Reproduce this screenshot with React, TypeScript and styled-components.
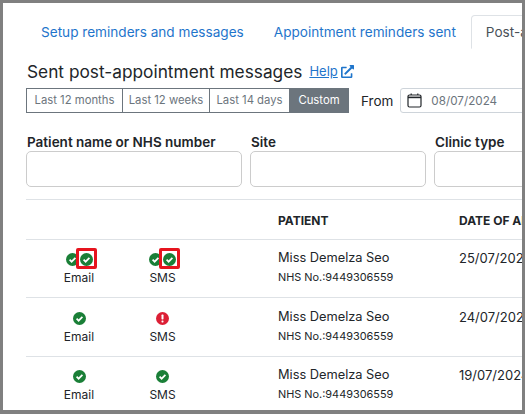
import styled, { createGlobalStyle } from 'styled-components';
import { FaExternalLinkAlt } from 'react-icons/fa';

const GlobalStyle = createGlobalStyle`
  html, body {
    margin: 0;
    padding: 0;
    background: #fff;
  }
  body {
    font-family: 'Inter', 'Open Sans', sans-serif;
    color: #212529;
  }
`;

const rows = [
  { name: 'Miss Demelza Seo', nhs: '9449306559', date: '25/07/2024', email: 'double', sms: 'double', tall: false },
  { name: 'Miss Demelza Seo', nhs: '9449306559', date: '24/07/2024', email: 'ok', sms: 'failed', tall: true },
  { name: 'Miss Demelza Seo', nhs: '9449306559', date: '19/07/2024', email: 'ok', sms: 'ok', tall: false },
];

function CheckIcon() {
  return (
    <StatusSvg viewBox="0 0 13 13">
      <circle cx="6.5" cy="6.5" r="6.5" fill="#1a7f37" />
      <path d="M3.6 6.7l2 2 3.8-3.9" fill="none" stroke="#fff" strokeWidth="1.7" />
    </StatusSvg>
  );
}

function AlertIcon() {
  return (
    <StatusSvg viewBox="0 0 13 13">
      <circle cx="6.5" cy="6.5" r="6.5" fill="#dc1f35" />
      <rect x="5.5" y="2.6" width="2" height="4.8" rx="0.6" fill="#fff" />
      <rect x="5.5" y="8.4" width="2" height="2" rx="0.6" fill="#fff" />
    </StatusSvg>
  );
}

function Status({ label, state }: { label: string; state: string }) {
  return (
    <StatusBlock>
      <IconRow>
        {state === 'failed' ? <AlertIcon /> : <CheckIcon />}
        {state === 'double' && (
          <Highlighted>
            <CheckIcon />
          </Highlighted>
        )}
      </IconRow>
      <StatusLabel>{label}</StatusLabel>
    </StatusBlock>
  );
}

export default function App() {
  return (
    <>
      <GlobalStyle />
      <Frame>
        <Page>
          <Tabs>
            <Tab>Setup reminders and messages</Tab>
            <Tab>Appointment reminders sent</Tab>
            <Tab $active>Post-appointment messages sent</Tab>
          </Tabs>
          <TitleRow>
            <Title>Sent post-appointment messages</Title>
            <HelpLink href="#">Help</HelpLink>
            <FaExternalLinkAlt size={13} color="#1f75cb" />
          </TitleRow>
          <RangeRow>
            <RangeGroup>
              <RangeButton $width={95}>Last 12 months</RangeButton>
              <RangeButton $width={87}>Last 12 weeks</RangeButton>
              <RangeButton $width={80}>Last 14 days</RangeButton>
              <RangeButton $width={59} $active>
                Custom
              </RangeButton>
            </RangeGroup>
            <FromLabel>From</FromLabel>
            <DateBox>
              <svg width="15" height="15" viewBox="0 0 15 15" fill="none" stroke="#212529" strokeWidth="1.2">
                <rect x="1" y="2" width="13" height="12" rx="1.5" />
                <path d="M1 4.4h13" strokeWidth="1.6" />
                <path d="M4.2 0.5v1.5M10.8 0.5v1.5" />
              </svg>
              <DateText>08/07/2024</DateText>
            </DateBox>
          </RangeRow>
          <Filters>
            <Field>
              <FieldLabel>Patient name or NHS number</FieldLabel>
              <FieldInput />
            </Field>
            <Field>
              <FieldLabel>Site</FieldLabel>
              <FieldInput />
            </Field>
            <Field>
              <FieldLabel>Clinic type</FieldLabel>
              <FieldInput />
            </Field>
          </Filters>
          <HeaderRow>
            <span />
            <span />
            <HeadCell>PATIENT</HeadCell>
            <HeadCell>DATE OF APPOINTMENT</HeadCell>
          </HeaderRow>
          {rows.map((row) => (
            <DataRow key={row.date} $tall={row.tall}>
              <Status label="Email" state={row.email} />
              <Status label="SMS" state={row.sms} />
              <PatientCell>
                <PatientName>{row.name}</PatientName>
                <NhsNumber>NHS No.:{row.nhs}</NhsNumber>
              </PatientCell>
              <DateValue>{row.date}</DateValue>
            </DataRow>
          ))}
        </Page>
      </Frame>
    </>
  );
}

const Frame = styled.div`
  box-sizing: border-box;
  width: 525px;
  height: 414px;
  border: solid #808080;
  border-width: 3px 3px 4px 3px;
  overflow: hidden;
  background: #fff;
`;

const Page = styled.div`
  width: 800px;
  padding: 12px 0 0 23px;
`;

const Tabs = styled.div`
  display: flex;
  height: 33px;
  border-bottom: 1px solid #dee2e6;
`;

const Tab = styled.div<{ $active?: boolean }>`
  box-sizing: border-box;
  height: 34px;
  padding: 0 14px;
  font-size: 13.6px;
  line-height: 33px;
  white-space: nowrap;
  color: ${(p) => (p.$active ? '#495057' : '#1f75cb')};
  background: #fff;
  border: 1px solid ${(p) => (p.$active ? '#dee2e6' : 'transparent')};
  border-bottom-color: ${(p) => (p.$active ? '#fff' : 'transparent')};
  border-radius: 4px 4px 0 0;
`;

const TitleRow = styled.div`
  display: flex;
  align-items: center;
  box-sizing: border-box;
  height: 39px;
  padding-top: 5px;
`;

const Title = styled.div`
  margin-left: 1px;
  font-size: 17.3px;
  color: #212529;
`;

const HelpLink = styled.a`
  margin: 0 3px 0 7px;
  font-size: 13px;
  color: #1f75cb;
`;

const RangeRow = styled.div`
  display: flex;
  align-items: center;
`;

const RangeGroup = styled.div`
  display: flex;
  height: 25px;
  border: 1px solid #6c757d;
  box-sizing: border-box;
`;

const RangeButton = styled.div<{ $width: number; $active?: boolean }>`
  box-sizing: border-box;
  width: ${(p) => p.$width}px;
  font-size: 11.3px;
  line-height: 23px;
  text-align: center;
  white-space: nowrap;
  color: ${(p) => (p.$active ? '#fff' : '#6c757d')};
  background: ${(p) => (p.$active ? '#6c757d' : '#fff')};
  & + & {
    border-left: 1px solid #6c757d;
  }
`;

const FromLabel = styled.div`
  margin: 0 7px 0 12px;
  font-size: 13.5px;
  color: #212529;
`;

const DateBox = styled.div`
  display: flex;
  align-items: center;
  box-sizing: border-box;
  width: 200px;
  height: 25px;
  padding-left: 6px;
  border: 1px solid #ced4da;
  border-radius: 3px;
`;

const DateText = styled.span`
  margin-left: 9px;
  font-size: 11.7px;
  color: #6c757d;
`;

const Filters = styled.div`
  display: grid;
  grid-template-columns: 216px 176px 176px;
  column-gap: 8px;
  margin-top: 20px;
  padding-bottom: 12px;
`;

const Field = styled.div`
  display: flex;
  flex-direction: column;
`;

const FieldLabel = styled.div`
  margin-left: 1px;
  font-size: 13.5px;
  font-weight: 600;
  line-height: 18px;
  white-space: nowrap;
  color: #212529;
`;

const FieldInput = styled.div`
  box-sizing: border-box;
  height: 36px;
  border: 1px solid #ccc;
  border-radius: 5px;
`;

const columns = `
  display: grid;
  grid-template-columns: 106px 61px 266px 1fr;
`;

const HeaderRow = styled.div`
  ${columns}
  box-sizing: border-box;
  height: 41px;
  align-items: center;
  border-top: 1px solid #dee2e6;
  border-bottom: 1px solid #dee2e6;
`;

const HeadCell = styled.div`
  padding: 1px 0 0 85px;
  font-size: 12px;
  font-weight: 700;
  white-space: nowrap;
  color: #212529;
  & + & {
    padding-left: 0;
  }
`;

const DataRow = styled.div<{ $tall: boolean }>`
  ${columns}
  box-sizing: border-box;
  height: ${(p) => (p.$tall ? 59 : 58)}px;
  padding-top: ${(p) => (p.$tall ? 11 : 10)}px;
  border-bottom: 1px solid #dee2e6;
`;

const StatusBlock = styled.div`
  display: flex;
  flex-direction: column;
  align-items: center;
  padding-top: 3px;
`;

const StatusSvg = styled.svg`
  display: block;
  width: 13px;
  height: 13px;
`;

const IconRow = styled.div`
  display: flex;
  height: 14px;
  gap: 1px;
`;

const Highlighted = styled.span`
  position: relative;
  display: block;
  height: 13px;
  &::after {
    content: '';
    position: absolute;
    top: -5px;
    left: -4px;
    width: 15px;
    height: 15px;
    border: 3px solid #e6141e;
    border-radius: 2px;
  }
`;

const StatusLabel = styled.div`
  margin-top: 3px;
  font-size: 12px;
  line-height: 16px;
  color: #212529;
`;

const PatientCell = styled.div`
  padding: 1px 0 0 85px;
`;

const PatientName = styled.div`
  font-size: 12.8px;
  line-height: 14px;
  white-space: nowrap;
  color: #212529;
`;

const NhsNumber = styled.div`
  margin-top: 5px;
  font-size: 10.9px;
  line-height: 14px;
  white-space: nowrap;
  color: #212529;
`;

const DateValue = styled.div`
  padding-top: 1px;
  font-size: 13px;
  line-height: 14px;
  color: #212529;
`;
